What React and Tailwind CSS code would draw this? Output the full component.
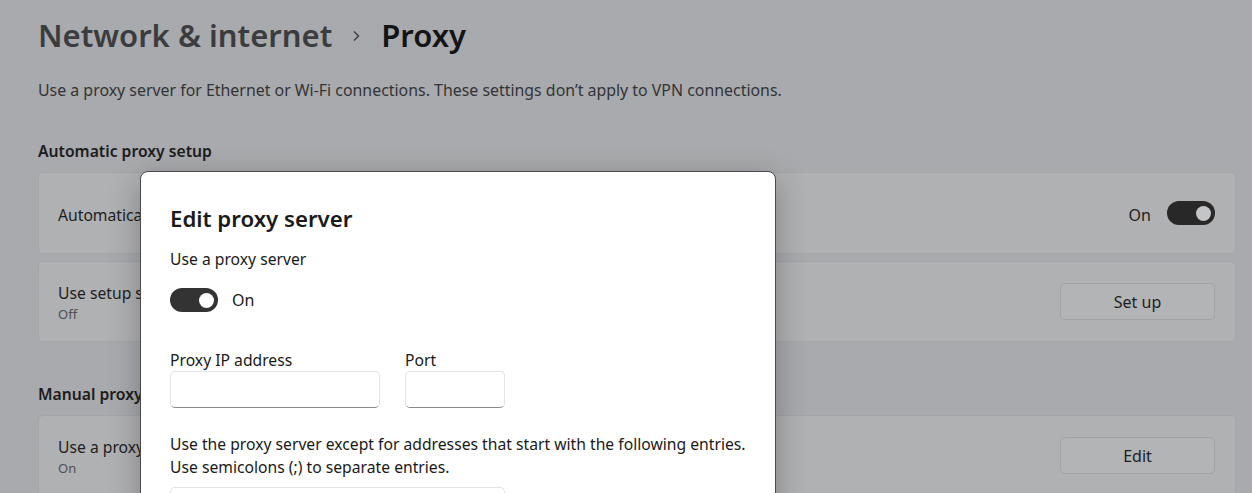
import React from "react";

const font = { fontFamily: '"Noto Sans", "Open Sans", sans-serif' };

function Toggle({ dim }) {
  return (
    <div
      className={
        "w-[48px] h-[24px] rounded-full flex items-center justify-end pr-[4px] " +
        (dim ? "bg-[#282828]" : "bg-[#333333]")
      }
    >
      <div
        className={
          "w-[15px] h-[15px] rounded-full " + (dim ? "bg-[#c4c5c7]" : "bg-white")
        }
      />
    </div>
  );
}

function Card({ children, h }) {
  return (
    <div
      className={
        "rounded-[5px] bg-[#b0b1b3] border border-[#a4a5a8] flex items-center pl-[19px] pr-[20px] " +
        h
      }
    >
      {children}
    </div>
  );
}

function Btn({ children }) {
  return (
    <div className="w-[155px] h-[37px] rounded-[5px] bg-[#b3b4b6] border border-[#a2a3a5] flex items-center justify-center text-[16px] text-[#1e1e1e]">
      {children}
    </div>
  );
}

export default function App() {
  return (
    <div
      className="relative w-[1252px] h-[493px] overflow-hidden bg-[#a8aaad]"
      style={font}
    >
      <div className="flex flex-col pl-[38px] pr-[16px]">
        <div className="h-[70px] flex items-center text-[31px] font-semibold">
          <span className="text-[#3b3c3e]">Network &amp; internet</span>
          <svg
            className="ml-[19px] mr-[20px] mt-[2px]"
            width="10"
            height="14"
            viewBox="0 0 10 14"
          >
            <path
              d="M3 2.5 L7.5 7 L3 11.5"
              fill="none"
              stroke="#3b3c3e"
              strokeWidth="1.4"
            />
          </svg>
          <span className="text-[#141414]">Proxy</span>
        </div>
        <div className="mt-[10px] h-[22px] flex items-center text-[15.9px] text-[#333436]">
          Use a proxy server for Ethernet or Wi-Fi connections. These settings
          don’t apply to VPN connections.
        </div>
        <div className="mt-[39px] h-[22px] flex items-center text-[15.7px] font-semibold text-[#1c1c1c]">
          Automatic proxy setup
        </div>
        <div className="mt-[9px] flex flex-col gap-[7px]">
          <Card h="h-[82px]">
            <div className="flex-1 text-[15.7px] text-[#1e1e1e] mt-[6px]">
              Automatically detect settings
            </div>
            <span className="text-[16px] text-[#1e1e1e] mr-[16px] mt-[3px]">On</span>
            <Toggle dim />
          </Card>
          <Card h="h-[81px]">
            <div className="flex-1 flex flex-col mt-[3px]">
              <span className="text-[15.7px] text-[#1e1e1e] leading-[21px]">
                Use setup script
              </span>
              <span className="text-[13px] text-[#4f5052] leading-[20px]">
                Off
              </span>
            </div>
            <Btn>Set up</Btn>
          </Card>
        </div>
        <div className="mt-[42px] h-[22px] flex items-center text-[15.7px] font-semibold text-[#1c1c1c]">
          Manual proxy setup
        </div>
        <div className="mt-[9px] flex flex-col">
          <Card h="h-[81px]">
            <div className="flex-1 flex flex-col mt-[3px]">
              <span className="text-[15.7px] text-[#1e1e1e] leading-[21px]">
                Use a proxy server
              </span>
              <span className="text-[13px] text-[#4f5052] leading-[20px]">
                On
              </span>
            </div>
            <Btn>Edit</Btn>
          </Card>
        </div>
      </div>

      <div className="absolute left-[140px] top-[171px] w-[636px] h-[360px] rounded-[8px] bg-white border border-[#4a4a4a] shadow-[0_8px_32px_rgba(0,0,0,0.28)] pl-[29px] pt-[33px] text-[#1a1a1a]">
        <div className="h-[28px] flex items-center text-[22.2px] font-semibold">
          Edit proxy server
        </div>
        <div className="mt-[17px] h-[20px] flex items-center text-[15.7px]">
          Use a proxy server
        </div>
        <div className="mt-[18px] flex items-center gap-[14px]">
          <Toggle />
          <span className="text-[16px]">On</span>
        </div>
        <div className="mt-[39px] flex gap-[25px]">
          <div className="flex flex-col">
            <div className="h-[20px] flex items-center text-[15.7px]">
              Proxy IP address
            </div>
            <div className="w-[210px] h-[37px] rounded-[5px] border border-[#e3e3e3] border-b-[#8a8a8a]" />
          </div>
          <div className="flex flex-col">
            <div className="h-[20px] flex items-center text-[15.7px]">Port</div>
            <div className="w-[100px] h-[37px] rounded-[5px] border border-[#e3e3e3] border-b-[#8a8a8a]" />
          </div>
        </div>
        <div className="mt-[25px] text-[15.7px] leading-[23px]">
          Use the proxy server except for addresses that start with the
          following entries.
          <br />
          Use semicolons (;) to separate entries.
        </div>
        <div className="mt-[8px] w-[335px] h-[37px] rounded-[5px] border border-[#e3e3e3] border-b-[#8a8a8a]" />
      </div>
    </div>
  );
}
